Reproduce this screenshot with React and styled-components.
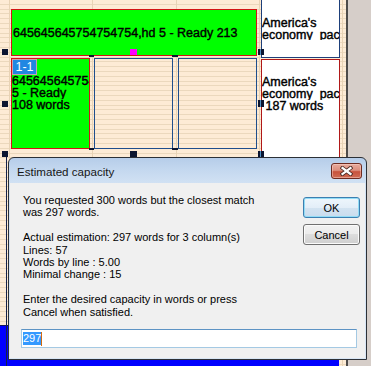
import React from "react";
import styled, { createGlobalStyle, css } from "styled-components";

const GlobalStyle = createGlobalStyle`
  html, body { margin: 0; padding: 0; }
  body { background: #d6cec9; font-family: "Liberation Sans", Arial, sans-serif; }
`;

const Screen = styled.div`
  position: relative;
  display: flex;
  width: 371px;
  height: 366px;
  overflow: hidden;
  background: #d6cec9;
`;

const Canvas = styled.div`
  position: relative;
  flex: none;
  width: 346px;
  height: 100%;
  display: flex;
  flex-direction: column;
  background-color: #fdebd5;
  background-image:
    repeating-linear-gradient(90deg, transparent 0 9px, #e8d3b5 9px 10px, transparent 10px 83.333px),
    repeating-linear-gradient(180deg, transparent 0 3.8px, #ebd8bd 3.8px 4.8px);
`;

const PageEdge = styled.div`
  flex: none;
  width: 2px;
  background: #4d4b4a;
`;

const Desk = styled.div`
  flex: 1;
  background: #d6cec9;
`;

const FrameGrid = styled.div`
  display: grid;
  grid-template-columns: 79px 4px 79px 5px 79px 4px 79px;
  grid-template-rows: 57px 91px;
  row-gap: 1px;
  padding-left: 11px;
`;

const frameText = css`
  font-family: "Liberation Sans", Arial, sans-serif;
  font-size: 12.5px;
  line-height: 12px;
  color: #000;
  -webkit-text-stroke: 0.4px #000;
  white-space: nowrap;
`;

const Banner = styled.div`
  grid-column: 1 / 6;
  grid-row: 1;
  align-self: start;
  margin-top: 9px;
  height: 47px;
  box-sizing: border-box;
  border: 1px solid #d31414;
  background: #00ff00;
  display: flex;
  align-items: center;
  padding-left: 1px;
  overflow: hidden;
  ${frameText}
`;

const ColumnFrame = styled.div`
  grid-row: 2;
  grid-column: ${(p) => p.$col};
  box-sizing: border-box;
  height: 91px;
  border: 1px solid ${(p) => (p.$filled ? "#d31414" : "#1f4e8c")};
  background: ${(p) => (p.$filled ? "#00ff00" : "transparent")};
  overflow: hidden;
  ${frameText}
`;

const SideFrame = styled.div`
  grid-column: 7;
  grid-row: ${(p) => p.$row};
  align-self: start;
  box-sizing: border-box;
  background: #fff;
  overflow: hidden;
  ${frameText}
  ${(p) =>
    p.$top
      ? css`
          height: 58px;
          border: 1px solid #1d3f7a;
          border-top: none;
          padding-top: 17px;
        `
      : css`
          margin-top: 1px;
          height: 220px;
          border: 1px solid #b01818;
          padding-top: 16px;
        `}
`;

const Clip = styled.div`
  height: ${(p) => p.$h}px;
  overflow: hidden;
`;

const Line = styled.div`
  overflow: hidden;
`;

const Badge = styled.div`
  width: 25px;
  height: 16px;
  box-sizing: border-box;
  border: 1px solid #c8a3ad;
  background: #2187e2;
  color: #fff;
  -webkit-text-stroke: 0;
  font-size: 12.5px;
  line-height: 14px;
  text-align: center;
`;

const Handle = styled.div`
  position: absolute;
  left: ${(p) => p.$x}px;
  top: ${(p) => p.$y}px;
  width: ${(p) => p.$w || 6}px;
  height: ${(p) => p.$h || 6}px;
  background: ${(p) =>
    p.$magenta
      ? "#ff00ff"
      : p.$split
      ? "linear-gradient(90deg, #0b1530 0 2px, #4f8fc4 2px 3px, #0b1530 3px)"
      : "#0b1530"};
`;

const FrameEdge = styled.div`
  position: absolute;
  left: 6px;
  top: 157px;
  bottom: 0;
  width: 1px;
  background: #14224a;
`;

const BlueZone = styled.div`
  margin-top: auto;
  width: 339px;
  height: 41px;
  box-sizing: border-box;
  background: #0000ff;
  border-top: 1px solid #15155a;
`;

/* Dialog */

const Dialog = styled.div`
  position: absolute;
  left: 8px;
  top: 157px;
  width: 359px;
  height: 203px;
  box-sizing: border-box;
  display: flex;
  flex-direction: column;
  border: 1px solid #2c3036;
  border-radius: 6px 6px 0 0;
  padding: 0 1px 1px;
  background: linear-gradient(180deg, #b6cde9 0px, #c4d8ef 12px, #d1e1f3 25px, #d9e6f5 100%);
  font-family: "Liberation Sans", Arial, sans-serif;
`;

const TitleBar = styled.div`
  flex: none;
  height: 25px;
  display: flex;
  align-items: flex-start;
  padding-left: 7px;
`;

const Title = styled.div`
  padding-top: 7px;
  font-size: 11.6px;
  line-height: 14px;
  color: #161616;
`;

const CloseButton = styled.div`
  margin: 5px 3px 0 auto;
  width: 31px;
  height: 16px;
  box-sizing: border-box;
  border: 1px solid #6e2b21;
  border-radius: 3px;
  background: linear-gradient(180deg, #e8aa9c 0%, #dc8f7e 45%, #c8523c 55%, #cf6d55 100%);
  box-shadow: inset 0 0 0 1px rgba(255, 220, 210, 0.45);
  display: flex;
  align-items: center;
  justify-content: center;
`;

const Client = styled.div`
  flex: 1;
  background: #f0f0f0;
  display: flex;
  flex-direction: column;
  padding: 11px 0 0 11px;
`;

const TopRow = styled.div`
  display: flex;
  align-items: flex-start;
`;

const Message = styled.div`
  flex: 1;
  padding-left: 2px;
  font-size: 11px;
  line-height: 12.4px;
  color: #000;
  white-space: pre;
`;

const ButtonColumn = styled.div`
  display: flex;
  flex-direction: column;
  gap: 6px;
  margin: 3px 5px 0 0;
`;

const Button = styled.div`
  width: 57px;
  height: 21px;
  box-sizing: border-box;
  display: flex;
  align-items: center;
  justify-content: center;
  font-size: 11px;
  color: #000;
  border-radius: 3px;
  border: 1px solid ${(p) => (p.$default ? "#3c7fb1" : "#707070")};
  background: ${(p) =>
    p.$default
      ? "linear-gradient(180deg, #eef6fc 0%, #e3eef8 50%, #d3e3f1 50%, #c9dcee 100%)"
      : "linear-gradient(180deg, #f2f2f2 0%, #ebebeb 50%, #dddddd 50%, #cfcfcf 100%)"};
  box-shadow: inset 0 0 0 1px ${(p) => (p.$default ? "#92dcf6" : "#fbfbfb")};
`;

const TextBox = styled.div`
  margin: 11px 8px 0 0;
  height: 19px;
  box-sizing: border-box;
  background: #fff;
  border: 1px solid #a4c9e3;
  border-top-color: #5d93c4;
  display: flex;
  align-items: center;
  padding-left: 1px;
  font-size: 11px;
`;

const Selected = styled.span`
  background: #3399ff;
  color: #fff;
  line-height: 13px;
  height: 13px;
`;

const Caret = styled.span`
  width: 1px;
  height: 14px;
  background: #d06a10;
`;

const message = `You requested 300 words but the closest match
was 297 words.

Actual estimation: 297 words for 3 column(s)
Lines: 57
Words by line : 5.00
Minimal change : 15

Enter the desired capacity in words or press
Cancel when satisfied.`;

const handles = [
  { x: 2, y: 49 },
  { x: 130, y: 49, w: 7, magenta: true },
  { x: 258, y: 49, w: 6, split: true },
  { x: 2, y: 101 },
  { x: 258, y: 100, w: 6, h: 7, split: true },
  { x: 2, y: 151 },
  { x: 130, y: 151, w: 7 },
  { x: 258, y: 151, w: 6, split: true },
  { x: 89, y: 55, w: 5, h: 2 },
  { x: 172, y: 55, w: 6, h: 2 },
  { x: 89, y: 148, w: 5, h: 2 },
  { x: 172, y: 148, w: 6, h: 2 },
];

export default function App() {
  return (
    <>
      <GlobalStyle />
      <Screen>
        <Canvas>
          <FrameGrid>
            <Banner>645645645754754754,hd 5 - Ready 213</Banner>
            <SideFrame $row={1} $top>
              <Clip $h={23}>
                <Line>America's</Line>
                <Line>economy_package</Line>
              </Clip>
            </SideFrame>
            <ColumnFrame $col={1} $filled>
              <Badge>1-1</Badge>
              <Line>645645645754754754,hd</Line>
              <Line>5 - Ready</Line>
              <Line>108 words</Line>
            </ColumnFrame>
            <ColumnFrame $col={3} />
            <ColumnFrame $col={5} />
            <SideFrame $row={2}>
              <Line>America's</Line>
              <Line>economy_package</Line>
              <Line>{"\u00a0187 words"}</Line>
            </SideFrame>
          </FrameGrid>
          <BlueZone />
          <FrameEdge />
          {handles.map((h, i) => (
            <Handle
              key={i}
              $x={h.x}
              $y={h.y}
              $w={h.w}
              $h={h.h}
              $magenta={h.magenta}
              $split={h.split}
            />
          ))}
        </Canvas>
        <PageEdge />
        <Desk />

        <Dialog>
          <TitleBar>
            <Title>Estimated capacity</Title>
            <CloseButton>
              <svg width="13" height="10" viewBox="0 0 13 10">
                <path d="M2.5 2 L10.5 8 M10.5 2 L2.5 8" stroke="#4a2a24" strokeWidth="4" strokeLinecap="square" />
                <path d="M2.5 2 L10.5 8 M10.5 2 L2.5 8" stroke="#ffffff" strokeWidth="2.2" strokeLinecap="square" />
              </svg>
            </CloseButton>
          </TitleBar>
          <Client>
            <TopRow>
              <Message>{message}</Message>
              <ButtonColumn>
                <Button $default>OK</Button>
                <Button>Cancel</Button>
              </ButtonColumn>
            </TopRow>
            <TextBox>
              <Selected>297</Selected>
              <Caret />
            </TextBox>
          </Client>
        </Dialog>
      </Screen>
    </>
  );
}
